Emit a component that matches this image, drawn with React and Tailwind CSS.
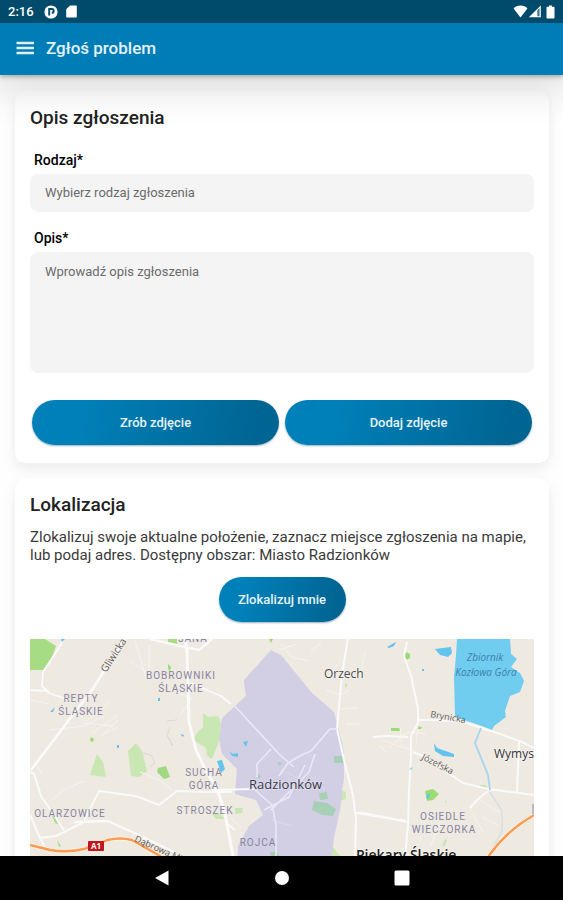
import React from "react";

const FONT = "font-[Roboto,'Noto_Sans',sans-serif]";

function StatusBar() {
  return (
    <div className="flex h-[23px] items-center justify-between bg-[#004b6b] px-2 text-white">
      <div className="flex items-center gap-2">
        <span className="text-[13px] leading-4 font-medium">2:16</span>
        <svg width="14" height="14" viewBox="0 0 14 14" aria-hidden="true" className="ml-0.5">
          <circle cx="7" cy="7" r="6.6" fill="#fff" />
          <path d="M5.2 10.500V4h2.600a1.900 1.900 0 0 1 0 3.800" fill="none" stroke="#004b6b" strokeWidth="1.900" />
        </svg>
        <svg width="11" height="13" viewBox="0 0 11 13" aria-hidden="true">
          <path d="M4 .5h6a.8.8 0 0 1 .8.8v10.400a.8.8 0 0 1-.8.8H1a.8.8 0 0 1-.8-.8V4.200z" fill="#fff" />
        </svg>
      </div>
      <div className="flex items-center">
        <svg width="15" height="13" viewBox="0 0 15 13" aria-hidden="true">
          <path d="M7.500 12.400.6 3.400C2.400 1.600 4.800.6 7.500.6s5.100 1 6.900 2.800z" fill="#fff" />
        </svg>
        <svg width="14" height="13" viewBox="0 0 14 13" aria-hidden="true">
          <path d="M.8 12.300 12.800.5v11.800z" fill="#fff" />
          <path d="M9.300 5.200v6h2.300V3z" fill="#004b6b" opacity=".75" />
        </svg>
        <svg width="9" height="14" viewBox="0 0 9 14" aria-hidden="true" className="ml-1">
          <path d="M3 .5h3v1.200h1.700a.8.8 0 0 1 .8.8v10.200a.8.8 0 0 1-.8.8H1.300a.8.8 0 0 1-.8-.8V2.500a.8.8 0 0 1 .8-.8H3z" fill="#fff" />
        </svg>
      </div>
    </div>
  );
}

function Header() {
  return (
    <header className="relative z-10 shadow-[0_2px_4px_rgba(0,0,0,0.25),0_8px_36px_8px_rgba(0,0,0,0.13)]">
      <StatusBar />
      <div className="flex h-[52px] items-center gap-3 bg-[#007db6] px-4 pb-0.5 text-white">
        <button type="button" aria-label="Menu">
          <svg width="18" height="14" viewBox="0 0 18 14" className="block" aria-hidden="true">
            <path d="M.5 2h17.500M.5 7h17.500M.5 12h17.500" stroke="#e0f0f8" strokeWidth="2.400" />
          </svg>
        </button>
        <h1 className="text-[17px] leading-6 font-medium text-[#e4f2f9]">Zgłoś problem</h1>
      </div>
    </header>
  );
}

function Card({ children }) {
  return (
    <section className="rounded-[10px] bg-white px-[15px] pt-[15px] pb-[18px] shadow-[0_6px_14px_rgba(0,0,0,0.08)]">
      {children}
    </section>
  );
}

function PillButton({ children }) {
  return (
    <button
      type="button"
      className="h-[45px] w-full rounded-full bg-linear-100 from-[#0080b9] from-20% to-[#006593] to-90% text-[13px] font-medium text-[#e6f3fa] shadow-[0_1px_2px_rgba(0,60,90,0.4)]"
    >
      {children}
    </button>
  );
}

function CityMap() {
  return (
    <svg
      role="img"
      aria-label="Mapa"
      viewBox="30 639 504 300"
      preserveAspectRatio="xMidYMin slice"
      className="block h-[300px] w-full font-['Open_Sans','Noto_Sans',sans-serif]"
    >
      <rect x="30" y="639" width="504" height="300" fill="#eee9e1" />

      <g fill="#c9e7b2">
        <path d="M30 639h15l11 7-5 14-8 10H30z" fill="#a5dc84" />
        <path d="M168 639h9v5h-9z" fill="#a5dc84" />
        <path d="M97 754l6 8 3 15-16-2z" />
        <path d="M128 751l8-8 6 8 5 20-8 6-8-1z" />
        <path d="M158 768l8-2 4 11-6 2-7-7z" fill="#a0da80" />
        <path d="M203 713l5 4 10-1 3 7-2 19-7 17-5-3-1-8-13-8 4-7 6-6z" />
        <path d="M91 737l3 2-1 3-3-1zM168 664l3 3-1 4-2-2zM269 639h4l-2 4z" fill="#9bdc73" />
        <path d="M52 815l5 5 1 4-3-1zM57 840l4 6-2 1z" fill="#a5dc84" />
        <path d="M212 814h8l5 5h-9zM235 808h8l-1 5-7 1zM340 790l6 2v7l-6 2zM330 843l6 8 4 5h-13z" />
        <path d="M406 652l4 2v4l-4 2-2-4z" fill="#9bdc73" />
        <path d="M391 728h9v3h-9zM417 726l5 1-1 2h-4zM425 791l8-2 6 5-6 6-6 1z" fill="#9bdc73" />
        <path d="M480 785h6v3h-6zM442 846l3-7 2 1-2 6zM345 683l3 2-3 3zM445 800l2 2-2 1z" />
      </g>

      <g fill="none" stroke="#ded9d3" strokeWidth="1">
        <path d="M167 721l10-1M169 737l3 9M143 753l8 2 4 8-5 4M170 727l-3 9 6 9" />
      </g>
      <g fill="none" stroke="#f7f4f0" strokeWidth="1">
        <path d="M84 723l30 3M92 733l26-18M49 730l35-4 20-10M75 711l12 11M110 702l-24 20M118 720l-16 15 16-8M130 661l22 14M149 645v35M135 641l12 40M43 775l-9-13M140 772l20 8 12 10M180 715l12-17M170 690l22 8M30 700l20 4M52 800l12-10 20-9" />
        <path d="M281 643l10 14 18 4M310 652l12-10M279 650l18-6M326 690l14 5 10-5M340 709l18-1M327 678l10-14M230 817l12 11M205 800l-13 10M346 724h14" />
        <path d="M383 740l12 5 18 5M390 747l18-15 18 2M400 728l2 17M418 724l-2 20M482 817l16 8M480 800l18 12 6-6M473 814l10 18M440 823l-10 24M500 834l-9 17M360 677l5-25M386 752l-7-7" />
      </g>

      <path
        d="M244 683v-3l27-30 10 5 31 38 22 19 8 30 2 12v23l-4 33-6 28-3 25-4 34H236l2-51 11-20 14-11-7-15-21-6 2-25-15-15-3-15 3-21 12-11 12-11z"
        fill="#d2cfe5"
      />

      <g fill="#a7cfb6">
        <path d="M334 756h9v7h-9zM319 793l8-1 1 7-8 1zM314 801l13 2 9 6-3 7-11-1-10-5z" />
        <path d="M277 762l5 1-3 3zM257 774l4 2-2 3zM270 852h6l3 4h-8z" />
      </g>

      <g fill="none" stroke="#fbfafb" strokeLinejoin="round">
        <path d="M128 634L90 693l-15 19-44 58" strokeWidth="2.600" />
        <path d="M64 639l-6 10-15 23-1 14 7 7 20 7M30 690l19 1" strokeWidth="1.800" />
        <path d="M30 772l4 2 7 22 23 34M30 815l10 23 5 9M40 838l16-2 28-14 3-7 12-24 37 5 23 9 18-14 27 1h28" strokeWidth="2" />
        <path d="M74 822l34-1 24 11 42 20M150 639l35 8 14 3 13-11" strokeWidth="2.400" />
        <path d="M185 639l2 10 2 73 7 28 11 23 10 15 8 26 8 42 6 40" strokeWidth="3" />
        <path d="M212 790l42-1M225 822l10 8M190 683l31 13 10 8" strokeWidth="1.800" />
        <path d="M348 639l-6 35-5 55 7 31 9 35 3 24-1 38-4 40M356 813l50 8M354 813h10M364 813l43 9" strokeWidth="2" />
        <path d="M407 642l-3 14 7 20 7 32v15l-7 13v19l-2 35-1 35-3 32M373 737l15-1 20 1M418 720h19l26 2 37 12 22 8 12 6M413 752l12 5 38 26 25 6 46 6M488 791l-11 9-7 8M519 742l-2 51" strokeWidth="2" />
      </g>
      <g fill="none" stroke="#e9e8f6" strokeLinejoin="round" strokeWidth="1.600">
        <path d="M232 703l48 52 14 12M337 729h-7l-19 22-9 4-14 8-9 13M315 754l-6 18-38 38M271 749l-14 15v13M254 789l18 16M272 805l4 20v31M305 765l-16 32-25 13" />
        <path d="M290 760l15-8 10 8M287 772l18 12 10-2M272 820l20 6M310 775l15 15" stroke="#dddaed" strokeWidth="1" />
      </g>

      <path
        d="M457 639h53l1 15 6 5-6 8 9 6 4 8-4 11-10 4-3 9-2 6 1 6-12 9-2 4-10-4-27-9-1-40 2-22z"
        fill="#70cdf0"
      />
      <g fill="#62c4ee">
        <path d="M435 649l16-2 1 6-4 4-8-2zM387 647l9-5-2 4-5 2zM434 743l3 5 17 6v3l-11-1-8-5zM426 798l2-5 2 2-2 4z" />
        <path d="M50 712l5-5-2 5zM61 639h4l-3 3zM243 742l5-1-2 6zM229 751l4 3 5-1v4l-6-1zM217 761l5-1 3 9-4 4zM180 734l4 1-1 2zM117 745h2v3h-2zM158 698h2v3h-2zM409 770l3-3v2zM422 669h2v2h-2z" />
      </g>
      <path d="M481 728l-6 15 13 32 2 15" fill="none" stroke="#a5d5ef" strokeWidth="1.800" />
      <path d="M490 792l12 19v20l-14 26" fill="none" stroke="#d7dfe3" strokeWidth="1.600" />

      <g fill="none" stroke="#fff3df" strokeWidth="4">
        <path d="M30 845l20 5q17 3 34-1l24-9q12-3 24 0l28 16 20 22M488 857q18-26 46-42" />
      </g>
      <g fill="none" stroke="#f99b52" strokeWidth="2.400">
        <path d="M30 845l20 5q17 3 34-1l24-9q12-3 24 0l28 16 20 22M488 857q18-26 46-42" />
      </g>
      <path d="M532 804h2v10h-2z" fill="#b9bac2" />
      <rect x="88" y="841" width="16" height="10" rx="1" fill="#c4151c" />
      <text x="96" y="849" fontSize="8" fontWeight="700" textAnchor="middle" fill="#fff">A1</text>

      <g fill="#8784a0" fontSize="10" textAnchor="middle" className="font-[Roboto,sans-serif] tracking-widest">
        <text x="81" y="702">REPTY</text>
        <text x="81" y="715">ŚLĄSKIE</text>
        <text x="181" y="679">BOBROWNIKI</text>
        <text x="181" y="692">ŚLĄSKIE</text>
        <text x="193" y="642">JANA</text>
        <text x="204" y="776">SUCHA</text>
        <text x="204" y="789">GÓRA</text>
        <text x="205" y="814">STROSZEK</text>
        <text x="258" y="846">ROJCA</text>
        <text x="70" y="817">OLARZOWICE</text>
        <text x="443" y="820">OSIEDLE</text>
        <text x="444" y="833">WIECZORKA</text>
      </g>
      <g fill="#4b4b50" stroke="#f3f0ea" strokeWidth="2" paintOrder="stroke" fontSize="12">
        <text x="324" y="678">Orzech</text>
        <text x="249" y="789" fill="#3b3b48" stroke="#dcd9ea" fontSize="13">Radzionków</text>
        <text x="494" y="758" fill="#36363a">Wymys</text>
        <text x="356" y="860" fill="#222" fontWeight="600" fontSize="14">Piekary Śląskie</text>
      </g>
      <g fill="#5f5c58" fontSize="9">
        <text transform="translate(106 673) rotate(-57)" fontSize="10">Gliwicka</text>
        <text transform="translate(134 841) rotate(24)">Dąbrowa Miejska</text>
        <text transform="translate(430 717) rotate(10)">Brynicka</text>
        <text transform="translate(421 759) rotate(27)">Józefska</text>
      </g>
      <g fill="#3c7fae" fontSize="10" fontStyle="italic" textAnchor="middle">
        <text x="485" y="661">Zbiornik</text>
        <text x="486" y="676">Kozłowa Góra</text>
      </g>
    </svg>
  );
}

function NavigationBar() {
  return (
    <nav className="relative z-10 flex h-11 shrink-0 items-center justify-center gap-[98px] bg-black">
      <button type="button" aria-label="Wstecz">
        <svg width="22" height="18" viewBox="0 0 22 18" className="block" aria-hidden="true">
          <path d="M4 9 17.500 1.500v15z" fill="#fff" />
        </svg>
      </button>
      <button type="button" aria-label="Ekran główny">
        <svg width="22" height="18" viewBox="0 0 22 18" className="block" aria-hidden="true">
          <circle cx="11" cy="9" r="7" fill="#fff" />
        </svg>
      </button>
      <button type="button" aria-label="Ostatnie">
        <svg width="22" height="18" viewBox="0 0 22 18" className="block" aria-hidden="true">
          <rect x="3.500" y="1.500" width="15" height="15" rx="1.500" fill="#fff" />
        </svg>
      </button>
    </nav>
  );
}

export default function App() {
  return (
    <div className={`flex h-screen flex-col overflow-hidden bg-[#fefefe] text-[#222] ${FONT}`}>
      <Header />
      <main className="flex min-h-0 flex-1 flex-col gap-[15px] overflow-hidden pt-4 pr-3.5 pl-[15px]">
        <Card>
          <h2 className="text-[19px] leading-6 font-medium">Opis zgłoszenia</h2>
          <form>
            <label htmlFor="kind" className="mt-5 ml-1 block text-[14px] leading-5 font-medium text-black">
              Rodzaj*
            </label>
            <select
              id="kind"
              defaultValue=""
              className="mt-1 block h-[38px] w-full appearance-none rounded-lg bg-[#f4f4f4] px-[15px] text-[13px] text-[#6b6b6b]"
            >
              <option value="">Wybierz rodzaj zgłoszenia</option>
            </select>
            <label htmlFor="description" className="mt-4 ml-1 block text-[14px] leading-5 font-medium text-black">
              Opis*
            </label>
            <textarea
              id="description"
              placeholder="Wprowadź opis zgłoszenia"
              className="mt-1 block h-[121px] w-full resize-none rounded-lg bg-[#f4f4f4] px-[15px] py-2.5 text-[13px] leading-5 placeholder:text-[#6b6b6b]"
            />
            <div className="mt-[27px] grid grid-cols-2 gap-1.5 px-[2px]">
              <PillButton>Zrób zdjęcie</PillButton>
              <PillButton>Dodaj zdjęcie</PillButton>
            </div>
          </form>
        </Card>

        <Card>
          <h2 className="text-[19px] leading-6 font-medium">Lokalizacja</h2>
          <p className="mt-[11px] text-[15px] leading-[18px] text-[#3a3a3a]">
            Zlokalizuj swoje aktualne położenie, zaznacz miejsce zgłoszenia na mapie, lub podaj adres. Dostępny
            obszar: Miasto Radzionków
          </p>
          <div className="mx-auto mt-[13px] mb-[17px] w-[127px]">
            <PillButton>Zlokalizuj mnie</PillButton>
          </div>
          <CityMap />
        </Card>
      </main>
      <NavigationBar />
    </div>
  );
}
